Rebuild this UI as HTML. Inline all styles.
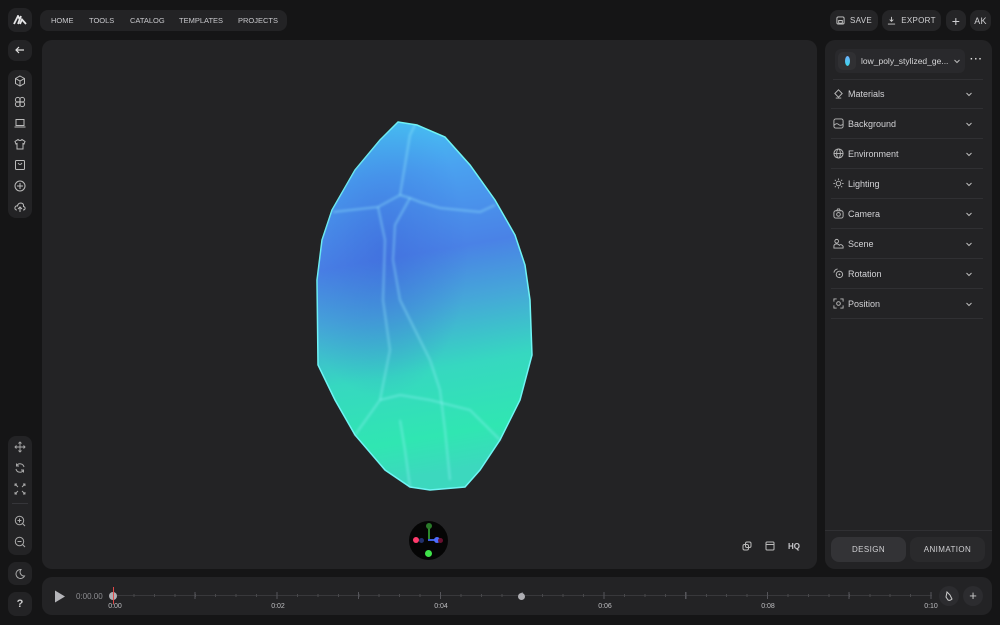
<!DOCTYPE html>
<html><head><meta charset="utf-8"><style>
*{box-sizing:border-box;margin:0;padding:0}
body{width:1000px;height:625px;background:#151516;font-family:"Liberation Sans",sans-serif;color:#c9c9cc;position:relative;overflow:hidden}
.abs{position:absolute}
.pill{background:#232325;border-radius:8px}
.nav{left:40px;top:10px;width:247px;height:21px;border-radius:8px;font-size:7.5px;color:#c8c8cc}
.nav span{position:absolute;top:6px}
.btn{top:10px;height:21px;border-radius:8px;background:#252527;display:flex;align-items:center;justify-content:center;font-size:8px;color:#cfcfd2;letter-spacing:.3px}
.col{left:8px;width:24px;background:#232325;border-radius:8px}
.ico{position:absolute;left:6px;width:12px;height:12px}
svg{display:block}
.row{position:absolute;left:831px;width:152px;height:30px;border-bottom:1px solid #303033;font-size:9px;color:#d2d2d5;display:flex;align-items:center}
.row svg{margin:0 4px 0 2px}
.row .ch{position:absolute;right:6px;top:11px}
.lbl{position:absolute;top:603px;font-size:7px;color:#bdbdc0;transform:translateX(-50%)}
</style></head><body>

<div class="abs pill" style="left:8px;top:8px;width:24px;height:24px;display:flex;align-items:center;justify-content:center">
<svg width="14" height="10" viewBox="0 0 14 10"><path d="M1 9 L5 1 L6.5 4 M7 9 L9 4.5 L13 9 M5 9 L8 1" stroke="#e6e6e8" stroke-width="1.8" fill="none"/></svg></div>
<div class="abs nav pill"><span style="left:11px">HOME</span><span style="left:49px">TOOLS</span><span style="left:90px">CATALOG</span><span style="left:139px">TEMPLATES</span><span style="left:198px">PROJECTS</span></div>

<div class="abs btn" style="left:830px;width:48px"><svg width="9" height="9" viewBox="0 0 10 10" style="margin-right:5px"><rect x="1" y="1" width="8" height="8" rx="1.5" stroke="#ccc" fill="none"/><rect x="3" y="5" width="4" height="3" stroke="#ccc" fill="none"/></svg>SAVE</div>
<div class="abs btn" style="left:882px;width:59px"><svg width="9" height="9" viewBox="0 0 10 10" style="margin-right:5px"><path d="M5 1V6M3 4L5 6L7 4M1 9H9" stroke="#ccc" fill="none"/></svg>EXPORT</div>
<div class="abs btn" style="left:946px;width:20px;font-size:14px">+</div>
<div class="abs btn" style="left:970px;width:21px;font-size:9px">AK</div>

<div class="abs col" style="top:40px;height:21px"><svg class="ico" style="top:4px" viewBox="0 0 12 12"><path d="M10 6H2M5 3L2 6L5 9" stroke="#ddd" stroke-width="1.2" fill="none"/></svg></div>
<div class="abs col" style="top:70px;height:148px">
<svg class="ico" style="top:5px" viewBox="0 0 12 12"><path d="M6 1L10.5 3.5V8.5L6 11L1.5 8.5V3.5ZM1.5 3.5L6 6L10.5 3.5M6 6V11" stroke="#bbb" fill="none"/></svg>
<svg class="ico" style="top:26px" viewBox="0 0 12 12"><circle cx="3.8" cy="3.8" r="2.4" stroke="#bbb" fill="none"/><circle cx="8.2" cy="3.8" r="2.4" stroke="#bbb" fill="none"/><circle cx="3.8" cy="8.2" r="2.4" stroke="#bbb" fill="none"/><circle cx="8.2" cy="8.2" r="2.4" stroke="#bbb" fill="none"/></svg>
<svg class="ico" style="top:47px" viewBox="0 0 12 12"><rect x="2" y="2.5" width="8" height="6" stroke="#bbb" fill="none"/><path d="M0.5 10H11.5" stroke="#bbb"/></svg>
<svg class="ico" style="top:68px" viewBox="0 0 12 12"><path d="M4 1.5L1 3.5L2 6L3 5.5V11H9V5.5L10 6L11 3.5L8 1.5Q6 3.5 4 1.5Z" stroke="#bbb" fill="none"/></svg>
<svg class="ico" style="top:89px" viewBox="0 0 12 12"><rect x="1.5" y="1.5" width="9" height="9" rx="1" stroke="#bbb" fill="none"/><path d="M4 4Q6 7 8 4" stroke="#bbb" fill="none"/></svg>
<svg class="ico" style="top:110px" viewBox="0 0 12 12"><circle cx="6" cy="6" r="5" stroke="#bbb" fill="none"/><path d="M6 3V9M3 6H9" stroke="#bbb"/></svg>
<svg class="ico" style="top:131px" viewBox="0 0 12 12"><path d="M3 9Q0.5 9 1 6.5Q1.5 4.5 3.5 5Q4 2 7 2Q10 2.5 9.5 5.5Q11.5 6 11 8Q10.5 9 9 9M6 11V6M4 8L6 6L8 8" stroke="#bbb" fill="none"/></svg>
</div>
<div class="abs col" style="top:436px;height:119px">
<svg class="ico" style="top:5px" viewBox="0 0 12 12"><path d="M6 1V11M1 6H11M4.5 2.5L6 1L7.5 2.5M4.5 9.5L6 11L7.5 9.5M2.5 4.5L1 6L2.5 7.5M9.5 4.5L11 6L9.5 7.5" stroke="#aaa" fill="none" stroke-width=".9"/></svg>
<svg class="ico" style="top:26px" viewBox="0 0 12 12"><path d="M10 5A4 4 0 0 0 2.5 4M2 7A4 4 0 0 0 9.5 8M2.5 1.5V4H5M9.5 10.5V8H7" stroke="#aaa" fill="none"/></svg>
<svg class="ico" style="top:47px" viewBox="0 0 12 12"><path d="M1 1L4 4M1 3V1H3M11 1L8 4M9 1H11V3M1 11L4 8M1 9V11H3M11 11L8 8M11 9V11H9" stroke="#aaa" fill="none" stroke-width=".9"/></svg>
<div style="position:absolute;left:4px;right:4px;top:67px;height:1px;background:#36363a"></div>
<svg class="ico" style="top:79px" viewBox="0 0 12 12"><circle cx="5.5" cy="5.5" r="4.2" stroke="#aaa" fill="none"/><path d="M8.5 8.5L11 11M3.5 5.5H7.5M5.5 3.5V7.5" stroke="#aaa"/></svg>
<svg class="ico" style="top:100px" viewBox="0 0 12 12"><circle cx="5.5" cy="5.5" r="4.2" stroke="#aaa" fill="none"/><path d="M8.5 8.5L11 11M3.5 5.5H7.5" stroke="#aaa"/></svg>
</div>
<div class="abs col" style="top:562px;height:23px"><svg class="ico" style="top:6px" viewBox="0 0 12 12"><path d="M7 1.5A4.5 4.5 0 1 0 10.5 8A4 4 0 0 1 7 1.5Z" stroke="#aaa" fill="none"/></svg></div>
<div class="abs col" style="top:592px;height:24px;text-align:center;font-size:11px;line-height:24px;color:#ccc;font-weight:bold">?</div>

<div class="abs" style="left:42px;top:40px;width:775px;height:529px;background:#232325;border-radius:10px"></div>
<svg class="abs" style="left:300px;top:110px" width="250" height="390" viewBox="300 110 250 390">
<defs>
<linearGradient id="g" x1="0" y1="0" x2="0.1" y2="1">
<stop offset="0" stop-color="#45c8f2"/><stop offset="0.18" stop-color="#4aa2f0"/><stop offset="0.4" stop-color="#4a82e6"/><stop offset="0.55" stop-color="#45a8d8"/><stop offset="0.72" stop-color="#36d8c0"/><stop offset="0.9" stop-color="#30e6b2"/><stop offset="1" stop-color="#3cd8be"/></linearGradient>
<radialGradient id="r" cx="0.3" cy="0.35" r="0.4"><stop offset="0" stop-color="#3a62d8" stop-opacity=".5"/><stop offset="1" stop-color="#3a62d8" stop-opacity="0"/></radialGradient>
<filter id="b"><feGaussianBlur stdDeviation="1.3"/></filter>
</defs>
<path d="M398 122L417 125L445 137L470 165L495 200L515 235L525 265L530 300L532 355L520 400L500 440L480 470L465 487L430 490L410 487L385 470L355 435L335 400L318 365L317 280L322 240L332 210L355 170L380 140Z" fill="url(#g)" stroke="#6ff4f4" stroke-width="1.5"/>
<path d="M398 122L417 125L445 137L470 165L495 200L515 235L525 265L530 300L532 355L520 400L500 440L480 470L465 487L430 490L410 487L385 470L355 435L335 400L318 365L317 280L322 240L332 210L355 170L380 140Z" fill="url(#r)"/>
<g stroke="#a0f6ff" stroke-opacity=".5" fill="none" stroke-width="1.5" filter="url(#b)">
<path d="M333 212L378 207L400 195L410 135L415 125"/>
<path d="M378 207L385 240L383 300L390 350L380 400L355 435"/>
<path d="M400 195L410 198L420 202L440 208L480 212L495 205"/>
<path d="M410 198L395 225L393 260L400 300L420 340L430 360L440 390L445 430L450 480"/>
<path d="M380 400L400 395L430 400L470 410L500 440"/>
<path d="M410 487L405 450L400 420"/>
</g>
</svg>
<div class="abs" style="left:409px;top:521px;width:39px;height:39px;border-radius:50%;background:#050505"></div>
<div class="abs" style="left:428px;top:527px;width:1.5px;height:13px;background:#2d8a2d"></div>
<div class="abs" style="left:428px;top:539px;width:10px;height:1.5px;background:#3d5fe0"></div>
<div class="abs" style="left:426px;top:523px;width:6px;height:6px;border-radius:50%;background:#2a7a2a"></div>
<div class="abs" style="left:413px;top:537px;width:6px;height:6px;border-radius:50%;background:#ff3b6b"></div>
<div class="abs" style="left:419px;top:538px;width:5px;height:5px;border-radius:50%;background:#22306a"></div>
<div class="abs" style="left:434px;top:537px;width:6px;height:6px;border-radius:50%;background:#4c6cff"></div>
<div class="abs" style="left:438px;top:538px;width:5px;height:5px;border-radius:50%;background:#6a1030"></div>
<div class="abs" style="left:425px;top:550px;width:7px;height:7px;border-radius:50%;background:#3fe34a"></div>
<svg class="abs" style="left:742px;top:541px" width="10" height="10" viewBox="0 0 10 10"><rect x="1" y="3.5" width="5.5" height="5.5" rx="1.5" stroke="#bbb" fill="none"/><rect x="3.5" y="1" width="5.5" height="5.5" rx="1.5" stroke="#bbb" fill="none"/></svg>
<svg class="abs" style="left:765px;top:541px" width="10" height="10" viewBox="0 0 10 10"><rect x="1" y="1" width="8" height="8" rx="1" stroke="#bbb" fill="none"/><path d="M1 3.5H9" stroke="#bbb"/></svg>
<div class="abs" style="left:788px;top:542px;font-size:8px;font-weight:bold;color:#c8c8cc">HQ</div>

<div class="abs" style="left:825px;top:40px;width:167px;height:529px;background:#232325;border-radius:10px"></div>
<div class="abs" style="left:835px;top:49px;width:130px;height:24px;background:#29292c;border-radius:6px;font-size:8.5px;color:#d6d6d8;display:flex;align-items:center;white-space:nowrap">
<div style="flex:none;width:18px;height:18px;margin:0 5px 0 3px;border-radius:5px;background:#303033;display:flex;align-items:center;justify-content:center"><div style="width:5px;height:10px;border-radius:50%;background:linear-gradient(#6fb0ff,#3bd7e8)"></div></div>low_poly_stylized_ge...
<svg width="8" height="8" viewBox="0 0 8 8" style="margin-left:5px;flex:none"><path d="M1.5 3L4 5.5L6.5 3" stroke="#bbb" fill="none"/></svg></div>
<div class="abs" style="left:970px;top:54px;font-size:10px;color:#ddd;letter-spacing:1px;font-weight:bold">···</div>
<div class="abs" style="left:833px;top:79px;width:150px;height:1px;background:#303033"></div>

<div class="row" style="top:79px"><svg width="11" height="11" viewBox="0 0 12 12"><path d="M2 6L6 2L10 6L6 10Z M3 11H9" stroke="#bbb" fill="none"/></svg>Materials<svg class="ch" width="8" height="8" viewBox="0 0 8 8"><path d="M1.5 3L4 5.5L6.5 3" stroke="#bbb" fill="none"/></svg></div>
<div class="row" style="top:109px"><svg width="11" height="11" viewBox="0 0 12 12"><rect x="1" y="1" width="10" height="10" rx="2" stroke="#bbb" fill="none"/><path d="M1 8Q4 5 6 7Q8 9 11 7" stroke="#bbb" fill="none"/></svg>Background<svg class="ch" width="8" height="8" viewBox="0 0 8 8"><path d="M1.5 3L4 5.5L6.5 3" stroke="#bbb" fill="none"/></svg></div>
<div class="row" style="top:139px"><svg width="11" height="11" viewBox="0 0 12 12"><circle cx="6" cy="6" r="5" stroke="#bbb" fill="none"/><ellipse cx="6" cy="6" rx="2" ry="5" stroke="#bbb" fill="none"/><path d="M1 6H11" stroke="#bbb"/></svg>Environment<svg class="ch" width="8" height="8" viewBox="0 0 8 8"><path d="M1.5 3L4 5.5L6.5 3" stroke="#bbb" fill="none"/></svg></div>
<div class="row" style="top:169px"><svg width="11" height="11" viewBox="0 0 12 12"><circle cx="6" cy="6" r="2.5" stroke="#bbb" fill="none"/><path d="M6 0.5V2M6 10V11.5M0.5 6H2M10 6H11.5M2 2L3 3M9 9L10 10M2 10L3 9M9 3L10 2" stroke="#bbb"/></svg>Lighting<svg class="ch" width="8" height="8" viewBox="0 0 8 8"><path d="M1.5 3L4 5.5L6.5 3" stroke="#bbb" fill="none"/></svg></div>
<div class="row" style="top:199px"><svg width="11" height="11" viewBox="0 0 12 12"><rect x="1" y="3" width="10" height="8" rx="2" stroke="#bbb" fill="none"/><circle cx="6" cy="7" r="2" stroke="#bbb" fill="none"/><path d="M4 3L5 1H7L8 3" stroke="#bbb" fill="none"/></svg>Camera<svg class="ch" width="8" height="8" viewBox="0 0 8 8"><path d="M1.5 3L4 5.5L6.5 3" stroke="#bbb" fill="none"/></svg></div>
<div class="row" style="top:229px"><svg width="11" height="11" viewBox="0 0 12 12"><circle cx="4" cy="3.5" r="2" stroke="#bbb" fill="none"/><path d="M1 11V9Q1 6.5 4 6.5Q6 6.5 7 8Q9 6 11 9V11Z" stroke="#bbb" fill="none"/></svg>Scene<svg class="ch" width="8" height="8" viewBox="0 0 8 8"><path d="M1.5 3L4 5.5L6.5 3" stroke="#bbb" fill="none"/></svg></div>
<div class="row" style="top:259px"><svg width="11" height="11" viewBox="0 0 12 12"><circle cx="7" cy="7" r="3.5" stroke="#bbb" fill="none"/><circle cx="7" cy="7" r="1" fill="#bbb"/><path d="M1 5A5 5 0 0 1 5 1" stroke="#bbb" fill="none"/></svg>Rotation<svg class="ch" width="8" height="8" viewBox="0 0 8 8"><path d="M1.5 3L4 5.5L6.5 3" stroke="#bbb" fill="none"/></svg></div>
<div class="row" style="top:289px"><svg width="11" height="11" viewBox="0 0 12 12"><path d="M1 4V1H4M8 1H11V4M1 8V11H4M8 11H11V8" stroke="#bbb" fill="none"/><circle cx="6" cy="6" r="2" stroke="#bbb" fill="none"/></svg>Position<svg class="ch" width="8" height="8" viewBox="0 0 8 8"><path d="M1.5 3L4 5.5L6.5 3" stroke="#bbb" fill="none"/></svg></div>

<div class="abs" style="left:825px;top:530px;width:167px;height:1px;background:#303033"></div>
<div class="abs" style="left:831px;top:537px;width:75px;height:25px;border-radius:8px;background:#333336;font-size:8px;letter-spacing:.4px;display:flex;align-items:center;justify-content:center;color:#d0d0d3">DESIGN</div>
<div class="abs" style="left:910px;top:537px;width:75px;height:25px;border-radius:8px;background:#2a2a2c;font-size:8px;letter-spacing:.4px;display:flex;align-items:center;justify-content:center;color:#d0d0d3">ANIMATION</div>

<div class="abs" style="left:42px;top:577px;width:950px;height:38px;background:#232325;border-radius:10px"></div>
<svg class="abs" style="left:54px;top:590px" width="12" height="13" viewBox="0 0 12 13"><path d="M1 0.5L11 6.5L1 12.5Z" fill="#b5b5b9"/></svg>
<div class="abs" style="left:76px;top:592px;font-size:8px;color:#8d8d91">0:00.00</div>
<div class="abs" style="left:113px;top:595px;width:819px;height:1px;background:#38383b"></div>
<div class="abs" style="left:113px;top:594px;width:819px;height:3px;background:repeating-linear-gradient(90deg,#48484b 0 1px,transparent 1px 20.44px)"></div>
<div class="abs" style="left:113px;top:592px;width:820px;height:7px;background:repeating-linear-gradient(90deg,#55555a 0 1px,transparent 1px 81.75px)"></div>
<div class="abs" style="left:109px;top:592px;width:8px;height:8px;border-radius:50%;background:#aeaeb3"></div>
<div class="abs" style="left:113px;top:587px;width:1px;height:17px;background:#e04848"></div>
<div class="abs" style="left:518px;top:593px;width:7px;height:7px;border-radius:50%;background:#aeaeb3"></div>
<div class="lbl" style="left:115px">0:00</div><div class="lbl" style="left:278px">0:02</div><div class="lbl" style="left:441px">0:04</div><div class="lbl" style="left:605px">0:06</div><div class="lbl" style="left:768px">0:08</div><div class="lbl" style="left:931px">0:10</div>
<div class="abs" style="left:939px;top:586px;width:20px;height:20px;border-radius:50%;background:#2c2c2f"></div>
<svg class="abs" style="left:944px;top:591px" width="10" height="11" viewBox="0 0 10 11"><path d="M3 1L6 4L8 8Q6 10 4 9L2 6Z" stroke="#ccc" fill="none"/></svg>
<div class="abs" style="left:963px;top:586px;width:20px;height:20px;border-radius:50%;background:#2c2c2f;text-align:center;line-height:20px;font-size:13px;color:#ccc">+</div>
</body></html>
